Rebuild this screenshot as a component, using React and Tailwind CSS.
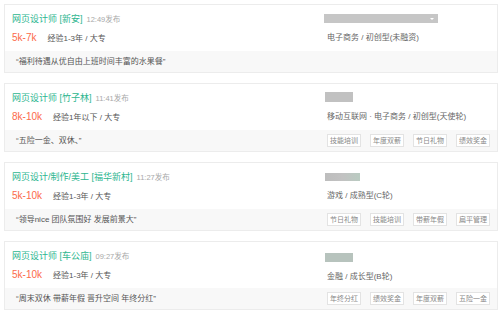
import React from "react";

const jobs = [
  {
    title: "网页设计师 [新安]",
    time: "12:49发布",
    salary: "5k-7k",
    req: "经验1-3年 / 大专",
    industry: "电子商务 / 初创型(未融资)",
    quote: "“福利待遇从优自由上班时间丰富的水果餐”",
    tags: [],
    company: "wide",
  },
  {
    title: "网页设计师 [竹子林]",
    time: "11:41发布",
    salary: "8k-10k",
    req: "经验1年以下 / 大专",
    industry: "移动互联网 · 电子商务 / 初创型(天使轮)",
    quote: "“五险一金、双休、”",
    tags: ["技能培训", "年度双薪", "节日礼物", "绩效奖金"],
    company: "small",
  },
  {
    title: "网页设计/制作/美工 [福华新村]",
    time: "11:27发布",
    salary: "5k-10k",
    req: "经验1-3年 / 大专",
    industry: "游戏 / 成熟型(C轮)",
    quote: "“领导nice 团队氛围好 发展前景大”",
    tags: ["节日礼物", "技能培训", "带薪年假", "扁平管理"],
    company: "mid",
  },
  {
    title: "网页设计师 [车公庙]",
    time: "09:27发布",
    salary: "5k-10k",
    req: "经验1-3年 / 大专",
    industry: "金融 / 成长型(B轮)",
    quote: "“周末双休 带薪年假 晋升空间 年终分红”",
    tags: ["年终分红", "绩效奖金", "年度双薪", "五险一金"],
    company: "green",
  },
];

function CompanyBlur({ kind }) {
  if (kind === "wide") {
    return (
      <div className="ml-[-1px] flex h-[9px] w-[114px] items-center justify-end bg-[#c6c6c6] pr-[4px]">
        <span className="h-0 w-0 border-x-[2px] border-t-[2px] border-x-transparent border-t-white" />
      </div>
    );
  }
  if (kind === "mid") {
    return (
      <div className="mt-[1px] flex h-[8px] w-[35px] bg-gradient-to-r from-[#bdbdbd] via-[#c2c2c2] to-[#b9cbc1]" />
    );
  }
  if (kind === "green") {
    return <div className="mt-[2px] h-[9px] w-[28px] bg-[#b7c3bd]" />;
  }
  return <div className="mt-[-1px] h-[10px] w-[28px] bg-[#c1c1c1]" />;
}

function JobCard({ job }) {
  return (
    <div className="flex flex-col border border-[#ececec] bg-white">
      <div className="grid h-[46px] grid-cols-[320px_1fr]">
        <div className="flex flex-col pl-[7px] pt-[8px]">
          <div className="flex h-[12px] items-baseline gap-[4px] leading-[12px]">
            <span className="text-[9px] text-[#2db68f]">{job.title}</span>
            <span className="text-[7.5px] text-[#a8a8a8]">{job.time}</span>
          </div>
          <div className="mt-[6px] flex h-[14px] items-baseline leading-[14px]">
            <span className="mr-[11px] text-[10px] text-[#fc6a4a]">
              {job.salary}
            </span>
            <span className="text-[8px] text-[#555]">{job.req}</span>
          </div>
        </div>
        <div className="flex flex-col pt-[9px]">
          <CompanyBlur kind={job.company} />
          <div className="mt-[8px] pl-[2px] text-[8px] leading-[14px] text-[#666]">
            {job.industry}
          </div>
        </div>
      </div>
      <div className="grid h-[21px] grid-cols-[320px_1fr] items-center bg-[#f8f8f8]">
        <div className="pl-[11px] text-[8px] text-[#555]">{job.quote}</div>
        <div className="flex gap-[9px] pl-[2px]">
          {job.tags.map((tag) => (
            <span
              key={tag}
              className="border border-[#e3e3e3] bg-white px-[2px] text-[7px] leading-[11px] text-[#888]"
            >
              {tag}
            </span>
          ))}
        </div>
      </div>
    </div>
  );
}

export default function App() {
  return (
    <div className="h-[316px] w-[500px] overflow-hidden bg-white pl-[4px] pr-[2px] pt-[4px] font-['Liberation_Sans','Noto_Sans_CJK_SC',sans-serif]">
      <div className="flex flex-col gap-[10px]">
        {jobs.map((job) => (
          <JobCard key={job.title} job={job} />
        ))}
      </div>
    </div>
  );
}
